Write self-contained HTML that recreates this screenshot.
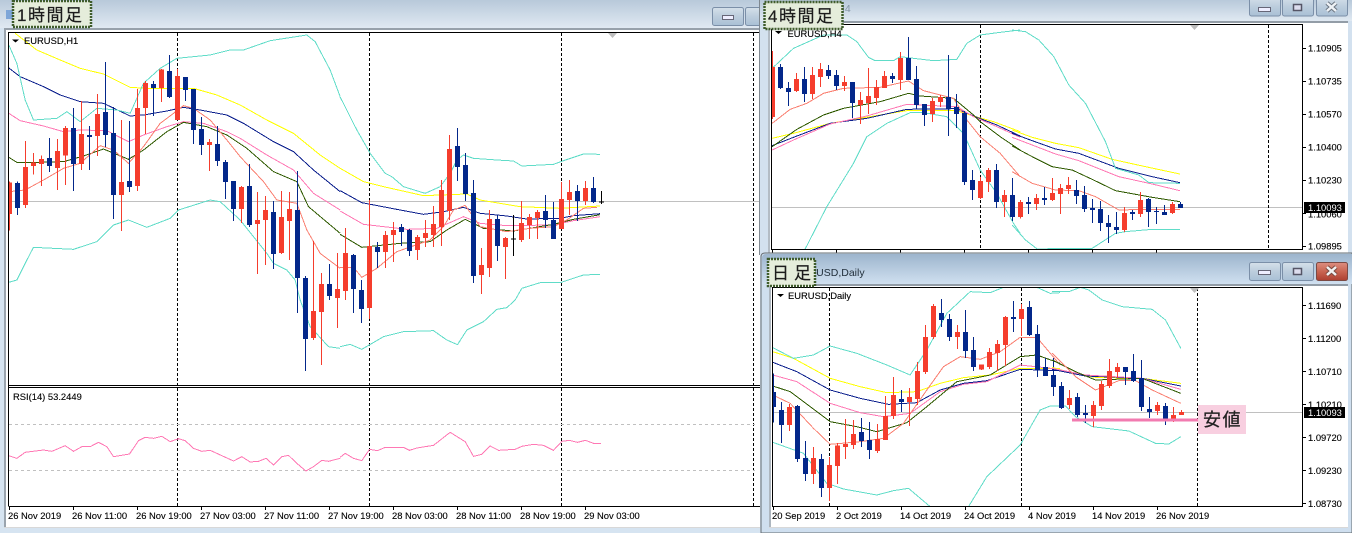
<!DOCTYPE html>
<html><head><meta charset="utf-8"><title>EURUSD</title>
<style>
html,body{margin:0;padding:0;background:#d6e4f1;width:1352px;height:533px;overflow:hidden}
svg{display:block}
text{font-family:"Liberation Sans","Noto Sans CJK JP",sans-serif;fill:#000;stroke:#000;stroke-width:.12px;font-size:9.4px}
.s{font-family:"Liberation Sans","Noto Sans CJK JP",sans-serif;font-size:17px;letter-spacing:1.5px;fill:#1c1c1c;stroke:#1c1c1c;stroke-width:.2px}
.c path,.c polyline,.l{fill:none;shape-rendering:crispEdges}
.rw{stroke:#f53d2d;stroke-width:3}.rb{stroke:#f53d2d;stroke-width:15}
.bw{stroke:#03278a;stroke-width:3}.bb{stroke:#03278a;stroke-width:15}
.k{stroke:#000;stroke-width:3}
.y{stroke:#ffff00;stroke-width:3}.n{stroke:#0a1e8c;stroke-width:3}.p{stroke:#ff78b4;stroke-width:3}
.g{stroke:#2f5a00;stroke-width:3}.a{stroke:#fa8072;stroke-width:3}.t{stroke:#60dcc8;stroke-width:3}
.bl{stroke:#000;stroke-width:1;fill:none;shape-rendering:crispEdges}
.d{stroke:#000;stroke-width:1;stroke-dasharray:3 2;fill:none;shape-rendering:crispEdges}
.gr{stroke:#c0c0c0;stroke-width:1;fill:none;shape-rendering:crispEdges}
.gd{stroke:#c0c0c0;stroke-width:1;stroke-dasharray:3 3;fill:none;shape-rendering:crispEdges}
.btn{stroke:#7b8fa8;stroke-width:1}
.st{fill:#e5eddb;stroke:#3f5c2c;stroke-width:2.5;stroke-dasharray:2 1}
</style></head><body>
<svg width="1352" height="533" viewBox="0 0 1352 533" xmlns="http://www.w3.org/2000/svg">
<defs>
<linearGradient id="ti" x1="0" y1="0" x2="0" y2="1"><stop offset="0" stop-color="#b8c9da"/><stop offset="1" stop-color="#e0e9f2"/></linearGradient>
<linearGradient id="ta" x1="0" y1="0" x2="0" y2="1"><stop offset="0" stop-color="#9db5cd"/><stop offset="1" stop-color="#d0e0f0"/></linearGradient>
<linearGradient id="bt" x1="0" y1="0" x2="0" y2="1"><stop offset="0" stop-color="#d5e0ea"/><stop offset=".5" stop-color="#bccddd"/><stop offset="1" stop-color="#a9c0d5"/></linearGradient>
<linearGradient id="bc" x1="0" y1="0" x2="0" y2="1"><stop offset="0" stop-color="#dc8e80"/><stop offset=".5" stop-color="#c96552"/><stop offset="1" stop-color="#ad4030"/></linearGradient>
<clipPath id="c1"><rect x="9" y="33" width="750" height="353"/></clipPath>
<clipPath id="c2"><rect x="772" y="25" width="530" height="224"/></clipPath>
<clipPath id="c3"><rect x="773" y="288" width="529" height="218"/></clipPath>
</defs>
<rect width="1352" height="533" fill="#d6e4f1"/>

<!-- H1 window -->
<rect x="0" y="0" width="762" height="28" fill="url(#ti)"/>
<rect x="4" y="28" width="2" height="500" fill="#9aa4ae"/>
<rect x="4" y="28" width="756" height="2" fill="#97a1ab"/>
<rect x="6" y="30" width="754" height="497" fill="#fff"/>
<rect x="4" y="527" width="756" height="1" fill="#d8d8d8"/>
<rect x="712.5" y="7.5" width="31" height="18" rx="2" fill="url(#bt)" class="btn"/>
<rect x="722.5" y="15.5" width="11" height="4" fill="#eef" stroke="#667"/>
<rect x="745.5" y="7.5" width="20" height="18" rx="2" fill="url(#bt)" class="btn"/>
<rect x="6" y="10" width="7" height="9" fill="#7ea6d8"/>

<path class="gr" d="M9 201.5H760"/>
<path class="d" d="M177.5 33V506M369.5 33V506M561.5 33V506M753.5 33V506"/>
<g clip-path="url(#c1)"><g class="c" transform="translate(.167,0) scale(.33333)">
<polyline class="y" points="45,100 110,150 180,180 240,205 310,222 390,262 440,265 580,265 650,285 720,315 800,360 880,400 960,465 1020,505"/>
<polyline class="n" points="26,204 60,230 130,260 180,285 240,305 310,310 390,348 430,345 500,333 550,322 600,330 680,345 730,370 820,425 880,455 940,510 1020,575"/>
<polyline class="p" points="26,340 60,362 130,378 190,395 240,390 320,392 385,425 430,405 500,380 550,365 610,370 680,395 720,415 800,465 880,510 940,580 1020,630"/>
<polyline class="g" points="26,472 50,487 110,487 190,485 250,468 310,447 385,478 430,450 500,395 550,367 620,380 680,405 740,445 820,515 890,545 925,620 1020,700"/>
<polyline class="a" points="26,575 75,570 130,540 190,505 240,490 300,437 340,450 385,490 430,440 480,370 520,340 550,317 580,325 630,360 680,420 720,470 790,545 830,600 890,610 920,690 960,760 1020,805"/>
<polyline class="t" points="26,135 50,190 75,300 100,360 170,355 200,335 240,365 290,325 350,330 390,340 430,250 480,205 530,175 630,165 690,150 730,150 810,122 920,105 945,125 990,210 1020,290"/>
<polyline class="t" points="26,847 50,840 75,790 100,742 220,748 290,725 340,675 385,660 440,682 510,655 535,630 630,600 660,605 720,660 800,760 820,790 860,810 885,840 900,900 930,980 985,1040 1020,1045"/>
<path class="rw" d="M28 545V692M76 423V624M100 459V524M124 467V558M172 417V570M196 378V555M244 303V510M292 282V468M364 360V693M412 267V573M436 243V402M484 207V306M532 207V360M628 417V513M724 558V669M772 576V822M796 588V795M844 573V762M868 576V780M940 723V1020M964 819V1095M1012 759V984"/>
<path class="rb" d="M28 548V642M76 501V615M100 488V498M124 477V492M172 453V504M196 384V466M244 402V492M292 342V408M364 546V585M412 324V558M436 249V324M484 209V264M532 228V360M628 426V435M724 561V627M772 660V672M796 630V660M844 651V759M868 627V663M940 933V1014M964 852V936M1012 867V894"/>
<path class="bw" d="M52 544V645M148 414V516M220 324V573M268 378V510M316 186V441M340 321V657M388 363V576M460 243V348M508 165V294M556 231V303M580 267V432M604 351V465M652 378V498M676 480V597M700 543V663M748 492V681M820 603V807M892 513V939M916 828V1113M988 792V900"/>
<path class="bb" d="M52 549V624M148 474V498M220 384V492M268 405V411M316 336V405M340 399V585M388 543V561M460 252V264M508 213V291M556 231V270M580 267V390M604 387V435M652 432V483M676 486V546M700 543V627M748 558V675M820 636V762M892 630V834M916 834V1017M988 852V888"/>
</g>
<g class="c" transform="translate(340.167,130) scale(.33333)">
<polyline class="t" points="0,-99 50,0 90,70 135,130 155,140 190,170 255,190 300,170 330,130 350,90 370,75 400,85 470,90 520,93 545,108 640,103 670,92 730,72 780,73"/>
<polyline class="y" points="0,115 70,155 130,170 250,197 300,195 380,192 420,210 540,230 660,235 780,228"/>
<polyline class="n" points="0,182 65,218 180,240 250,253 310,245 370,232 420,250 500,258 560,267 660,265 700,257 780,251"/>
<polyline class="p" points="0,243 70,283 200,298 290,295 370,260 420,280 500,287 640,285 700,272 780,260"/>
<polyline class="g" points="0,313 65,352 180,340 270,335 320,300 375,268 430,295 520,303 640,283 700,268 780,254"/>
<polyline class="a" points="0,412 40,412 65,442 110,415 170,365 270,330 310,290 340,240 375,226 420,290 500,305 570,295 640,290 680,270 730,235 770,232"/>
<polyline class="t" points="0,650 30,643 65,658 130,620 190,605 280,602 320,630 352,644 380,600 430,575 470,538 500,533 525,510 545,475 600,458 660,458 730,435 780,433"/>
<path class="rw" d="M16 294V510M88 210V567M136 303V414M160 276V396M232 315V390M256 270V351M280 228V351M304 150V348M328 15V270M424 354V492M448 240V441M496 321V447M544 213V336M568 252V327M592 240V327M664 156V297M688 150V255M736 153V225"/>
<path class="rb" d="M16 369V483M88 348V534M136 315V366M160 300V315M232 321V360M256 309V324M280 282V315M304 180V291M328 57V243M424 405V435M448 267V414M496 324V351M544 279V330M568 261V285M592 246V264M664 207V297M688 186V210M736 174V213"/>
<path class="bw" d="M40 372V549M64 450V579M112 336V414M184 282V348M208 297V378M352 -6V153M376 69V213M400 150V459M472 255V393M616 195V294M640 216V327M712 165V273M760 141V219"/>
<path class="bb" d="M40 375V477M64 480V537M112 351V366M184 291V306M208 300V363M352 48V111M376 105V192M400 189V438M472 267V348M616 243V270M640 270V327M712 183V213M760 174V216"/>
<path class="k" d="M520 255V378M513 327H528M784 183V222M777 216H792"/>
</g></g>
<path class="bl" d="M8.5 506V32.5H760M8.5 506.5H760M8.5 385.5H760M8.5 387.5H760"/>
<path fill="#bdbdbd" d="M608 33h9l-4.500 5z"/>
<path fill="#000" d="M12 39.500h7l-3.500 3z"/>
<text x="24" y="44">EURUSD,H1</text>
<text x="13" y="400">RSI(14) 53.2449</text>
<path class="gd" d="M9 424.500H755M9 470.500H755"/>
<g class="c" transform="translate(.167,250) scale(.33333)"><polyline class="p" points="26,617 50,625 75,607 130,600 155,604 195,587 220,604 245,590 270,590 295,577 320,590 340,620 388,612 415,572 435,562 460,565 485,559 510,575 535,566 555,572 580,595 605,604 630,601 700,633 725,620 750,636 775,634 798,625 820,645 845,620 865,616 890,640 917,663 940,650 965,631 985,634 1020,625"/></g>
<g class="c" transform="translate(340.167,380) scale(.33333)"><polyline class="p" points="0,232 15,220 40,235 65,242 88,208 112,212 135,202 190,202 208,211 230,204 280,196 330,157 375,185 400,229 425,223 450,198 475,211 525,208 545,199 580,193 610,196 640,211 665,184 688,181 712,187 736,181 760,190 782,190"/></g>
<path class="bl" d="M9.500 507V510M73.500 507V510M137.500 507V510M201.500 507V510M265.500 507V510M329.500 507V510M393.500 507V510M457.500 507V510M521.500 507V510M585.500 507V510"/>
<text x="8" y="519">26 Nov 2019</text><text x="72" y="519">26 Nov 11:00</text><text x="136" y="519">26 Nov 19:00</text><text x="200" y="519">27 Nov 03:00</text><text x="264" y="519">27 Nov 11:00</text><text x="328" y="519">27 Nov 19:00</text><text x="392" y="519">28 Nov 03:00</text><text x="456" y="519">28 Nov 11:00</text><text x="520" y="519">28 Nov 19:00</text><text x="584" y="519">29 Nov 03:00</text>

<!-- H4 window -->
<rect x="759" y="0" width="593" height="255" fill="#d3e1ef"/>
<rect x="759" y="0" width="1" height="255" fill="#7f8890"/>
<rect x="760" y="0" width="592" height="21" fill="url(#ti)"/>
<rect x="768" y="21" width="580" height="2" fill="#939da7"/>
<rect x="768" y="23" width="580" height="232" fill="#fff"/>
<rect x="768" y="23" width="2" height="232" fill="#b3bcc5"/>
<text x="790" y="12" style="font-size:10.5px;fill:#8496a6;stroke:none">EURUSD,H4</text>
<rect x="1249.500" y="-3" width="31" height="19" rx="2" fill="url(#bt)" class="btn"/>
<rect x="1258.500" y="7.500" width="12" height="4" fill="#eef" stroke="#667"/>
<rect x="1282.500" y="-3" width="31" height="19" rx="2" fill="url(#bt)" class="btn"/>
<rect x="1293.500" y="4.500" width="8" height="6" fill="#dde" stroke="#556" stroke-width="1.500"/>
<rect x="1316.500" y="-3" width="31" height="19" rx="2" fill="url(#bt)" class="btn"/>
<path d="M1327 3l9 8M1336 3l-9 8" stroke="#6a7480" stroke-width="4.500" fill="none"/><path d="M1327 3l9 8M1336 3l-9 8" stroke="#eef2f6" stroke-width="2.500" fill="none"/>

<path class="gr" d="M772 207.500H1303"/>
<path class="d" d="M980.500 25V249M1268.500 25V249"/>
<g clip-path="url(#c2)"><g class="c" transform="translate(680.167,0) scale(.33333)">
<polyline class="y" points="276,415 340,400 450,370 600,345 680,332 830,332 880,348 940,365 1020,395"/>
<polyline class="n" points="276,437 340,412 450,370 560,355 680,328 830,326 880,348 950,375 1020,408"/>
<polyline class="p" points="276,450 340,420 450,372 560,348 680,313 830,320 880,350 950,380 1020,412"/>
<polyline class="g" points="276,440 350,388 430,345 490,325 600,305 685,280 720,288 820,295 880,345 900,365 960,410 1020,450"/>
<polyline class="a" points="276,370 330,328 380,310 430,280 490,265 600,262 685,243 730,272 820,295 860,360 900,410 960,460 1020,530"/>
<polyline class="t" points="276,205 340,145 430,105 500,105 530,125 565,172 585,182 640,182 660,170 700,175 760,182 830,178 860,130 900,105 960,97 1020,90"/>
<polyline class="t" points="375,747 440,620 520,490 560,410 620,370 690,338 730,338 800,350 850,400 900,510 950,580 1000,670 1020,700"/>
<path class="rw" d="M277 153V357M349 219V276M397 201V297M421 189V261M493 228V273M541 276V372M565 204V342M589 240V315M613 213V264M661 156V270M757 294V366M781 285V321M901 531V597M925 504V576M973 570V651M1021 600V655"/>
<path class="rb" d="M277 201V351M349 237V273M397 225V282M421 207V231M493 246V258M534 307H548M565 288V309M589 261V294M613 228V264M661 174V240M757 303V342M781 291V306M901 543V594M925 510V546M973 585V606"/>
<path class="bw" d="M301 192V267M325 246V318M373 201V306M445 195V237M469 210V270M517 246V354M637 219V249M685 111V240M709 198V327M733 312V378M805 165V408M829 282V384M853 333V555M877 510V600M949 492V624M997 534V663"/>
<path class="bb" d="M301 201V264M325 264V276M373 237V282M445 210V228M469 225V258M517 246V309M637 228V237M685 174V240M709 237V315M733 312V345M805 291V327M829 321V342M853 339V546M877 540V570M949 510V606M997 585V651"/>
</g>
<g class="c" transform="translate(1012.167,0) scale(.33333)">
<polyline class="y" points="0,390 60,412 130,430 200,443 300,478 400,500 503,522"/>
<polyline class="n" points="0,400 60,422 130,447 200,460 320,505 420,530 503,548"/>
<polyline class="p" points="0,412 60,435 130,462 200,482 320,530 420,552 503,572"/>
<polyline class="g" points="0,438 60,470 120,500 180,510 240,538 310,572 420,592 503,605"/>
<polyline class="a" points="0,515 60,550 130,570 200,572 250,590 320,630 400,628 503,628"/>
<polyline class="t" points="0,90 40,95 80,120 125,170 170,255 220,310 280,425 310,505 380,525 410,548 503,550"/>
<polyline class="t" points="0,675 40,720 75,747 160,745 240,745 310,700 340,695 420,688 503,688"/>
<path class="rw" d="M25 600V655M73 582V630M121 534V603M145 552V642M169 531V582M337 621V696M385 576V651M481 606V642"/>
<path class="rb" d="M25 606V651M73 594V612M121 579V600M145 564V582M169 555V567M337 639V690M385 600V642M481 612V639"/>
<path class="bw" d="M49 591V642M97 561V615M193 540V612M217 558V636M241 597V669M265 603V693M289 645V729M313 636V702M361 630V660M409 594V681M433 621V672M457 615V645M505 606V624"/>
<path class="bb" d="M49 606V612M97 594V600M193 570V588M217 585V627M241 624V630M265 627V669M289 669V681M313 681V690M361 636V642M409 597V636M433 633V636M457 636V645M505 612V624"/>
</g></g>
<rect class="bl" x="771.500" y="24.500" width="531" height="225"/>
<path fill="#bdbdbd" d="M1190 25h9l-4.500 5z"/>
<path fill="#000" d="M775 31h7l-3.500 3z"/>
<text x="787.500" y="37">EURUSD,H4</text>
<path class="bl" d="M772.500 250V253M836.500 250V253M900.500 250V253M964.500 250V253M1028.500 250V253M1092.500 250V253M1156.500 250V253M1303 48.500H1306M1303 81.500H1306M1303 114.500H1306M1303 147.500H1306M1303 180.500H1306M1303 213.500H1306M1303 246.500H1306"/>
<text x="1308" y="51.500">1.10905</text><text x="1308" y="84.500">1.10735</text><text x="1308" y="117.500">1.10570</text><text x="1308" y="150.500">1.10400</text><text x="1308" y="183.500">1.10230</text><text x="1308" y="217.500">1.10060</text><text x="1308" y="249.500">1.09895</text>
<rect x="1304" y="202" width="41" height="11" fill="#000"/>
<text x="1308" y="211" style="fill:#fff;stroke:none">1.10093</text>

<!-- Daily window -->
<path d="M761 533V257q0-4 4-4H1352V533z" fill="#cfdfef" stroke="#666c72" stroke-width="1"/>
<path d="M762 284V258q0-4 4-4H1352V284z" fill="url(#ta)"/>
<rect x="769" y="284" width="579" height="2" fill="#929ca6"/>
<rect x="769" y="286" width="579" height="241" fill="#fff"/>
<rect x="769" y="286" width="2" height="241" fill="#adb6bf"/>
<rect x="769" y="527" width="579" height="1" fill="#d8d8d8"/>
<text x="794" y="276" style="font-size:10.5px;fill:#22303c;stroke:none">EURUSD,Daily</text>
<rect x="1249.500" y="262.500" width="31" height="18" rx="2" fill="url(#bt)" class="btn"/>
<rect x="1258.500" y="270.500" width="12" height="4" fill="#eef" stroke="#667"/>
<rect x="1282.500" y="262.500" width="31" height="18" rx="2" fill="url(#bt)" class="btn"/>
<rect x="1293.500" y="268.500" width="8" height="6" fill="#dde" stroke="#556" stroke-width="1.500"/>
<rect x="1316.500" y="262.500" width="31" height="18" rx="2" fill="url(#bc)" stroke="#7b4a44"/>
<path d="M1327 267l9 8M1336 267l-9 8" stroke="#7a4a40" stroke-width="4.500" fill="none"/><path d="M1327 267l9 8M1336 267l-9 8" stroke="#f2f2f2" stroke-width="2.500" fill="none"/>

<path class="gr" d="M773 412.500H1303"/>
<path class="d" d="M829.500 288V506M1021.500 288V506M1197.500 288V506"/>
<g clip-path="url(#c3)"><g class="c" transform="translate(760.167,250) scale(.33333)">
<polyline class="y" points="38,305 100,325 210,385 300,410 380,428 470,425 540,400 610,383 690,375 780,355 900,355"/>
<polyline class="n" points="38,337 110,365 210,420 300,445 385,463 470,458 540,420 610,400 680,392 780,358 900,362"/>
<polyline class="p" points="38,375 110,395 210,460 300,488 370,500 450,490 540,425 610,403 680,395 780,345 900,358"/>
<polyline class="g" points="38,408 90,425 210,515 290,530 350,545 440,518 500,470 590,395 690,375 780,320 830,315 900,340"/>
<polyline class="a" points="38,435 90,460 160,535 210,583 300,575 370,565 430,520 500,420 550,350 600,320 660,328 720,305 780,262 830,262 900,345"/>
<polyline class="t" points="38,293 100,325 160,315 210,288 290,310 380,345 450,375 500,300 560,190 630,125 690,128 730,112"/>
<polyline class="t" points="830,112 870,130 900,128"/>
<polyline class="t" points="38,577 130,610 200,700 250,717 350,735 400,722 445,715 510,770"/>
<polyline class="t" points="625,770 680,680 780,585 840,480 870,468 900,468"/>
<path class="rw" d="M88 462V543M160 591V702M208 621V753M232 579V702M256 507V627M280 510V597M352 522V609M376 438V570M400 381V507M448 414V528M472 336V465M496 225V372M520 162V267M592 225V297M664 345V360M688 294V357M712 270V363M736 198V348M784 162V258"/>
<path class="rb" d="M88 471V525M160 624V672M208 645V714M232 587V648M256 582V591M280 552V585M352 567V603M376 498V570M400 435V498M448 441V456M472 363V447M496 261V366M520 168V261M592 246V261M657 351H671M688 306V351M712 282V309M736 201V285M784 177V207"/>
<path class="bw" d="M40 370V518M64 456V579M112 465V636M136 573V693M184 612V741M304 504V591M328 516V627M424 420V486M544 147V231M568 192V273M616 180V324M640 261V363M760 153V246M808 153V258M832 225V381M856 324V378M880 324V438"/>
<path class="bb" d="M40 426V471M64 480V525M112 468V627M136 624V672M184 627V714M304 546V573M328 570V600M424 447V456M544 189V210M568 207V261M616 246V303M640 300V351M760 201V207M808 171V255M832 252V360M856 351V378M880 375V411"/>
</g>
<g class="c" transform="translate(1052.167,250) scale(.33333)">
<polyline class="y" points="0,352 70,372 130,382 270,385 386,400"/>
<polyline class="n" points="0,358 100,378 270,385 386,408"/>
<polyline class="p" points="0,355 100,375 270,385 386,418"/>
<polyline class="g" points="0,330 70,365 130,390 270,385 386,430"/>
<polyline class="a" points="0,310 70,380 130,420 200,392 250,392 300,420 386,460"/>
<polyline class="t" points="0,125 50,125 85,112 110,120 150,150 210,170 300,178 340,210 386,295"/>
<polyline class="t" points="0,468 40,468 70,500 120,530 230,543 310,580 350,582 386,560"/>
<path class="rw" d="M52 420V477M124 453V531M148 393V480M172 327V414M196 339V384M316 456V495M364 471V516M388 480V495"/>
<path class="rb" d="M52 444V465M124 465V498M148 402V468M172 363V408M196 351V366M316 465V483M364 495V513M388 486V495"/>
<path class="bw" d="M28 396V477M76 429V501M100 465V519M220 351V405M244 312V396M268 330V483M292 441V504M340 459V525"/>
<path class="bb" d="M28 408V474M76 441V495M100 489V495M220 351V366M244 363V393M268 384V471M292 477V486M340 468V510"/>
</g></g>
<rect class="bl" x="772.500" y="287.500" width="530" height="219"/>
<path fill="#bdbdbd" d="M1190 288h9l-4.500 5z"/>
<path fill="#000" d="M777 294h7l-3.500 3z"/>
<text x="788" y="299">EURUSD,Daily</text>
<path class="bl" d="M773.500 507V510M837.500 507V510M901.500 507V510M965.500 507V510M1029.500 507V510M1093.500 507V510M1157.500 507V510M1303 305.500H1306M1303 338.500H1306M1303 371.500H1306M1303 404.500H1306M1303 437.500H1306M1303 470.500H1306M1303 503.500H1306"/>
<text x="1308" y="309">1.11690</text><text x="1308" y="342">1.11200</text><text x="1308" y="375">1.10710</text><text x="1308" y="408">1.10210</text><text x="1308" y="441">1.09720</text><text x="1308" y="474">1.09230</text><text x="1308" y="507">1.08730</text>
<rect x="1304" y="407" width="41" height="11" fill="#000"/>
<text x="1308" y="416" style="fill:#fff;stroke:none">1.10093</text>
<text x="772" y="519">20 Sep 2019</text><text x="836" y="519">2 Oct 2019</text><text x="900" y="519">14 Oct 2019</text><text x="964" y="519">24 Oct 2019</text><text x="1028" y="519">4 Nov 2019</text><text x="1092" y="519">14 Nov 2019</text><text x="1156" y="519">26 Nov 2019</text>

<!-- annotations -->
<rect x="1072" y="418.500" width="126" height="3" fill="#f27bb0"/>
<rect x="1198" y="405" width="48" height="29" fill="#f8cfe0"/>
<text x="1203" y="426" style="font-size:18px;letter-spacing:1.500px;fill:#222;stroke:#222;stroke-width:.25px">安値</text>

<rect class="st" x="13" y="1" width="78" height="26"/>
<text class="s" x="17" y="21">1時間足</text>
<rect class="st" x="764.500" y="2" width="78" height="27"/>
<text class="s" x="768" y="22">4時間足</text>
<rect class="st" x="768" y="259" width="47" height="27"/>
<text class="s" x="772" y="279" style="letter-spacing:5px">日足</text>
</svg>
</body></html>
